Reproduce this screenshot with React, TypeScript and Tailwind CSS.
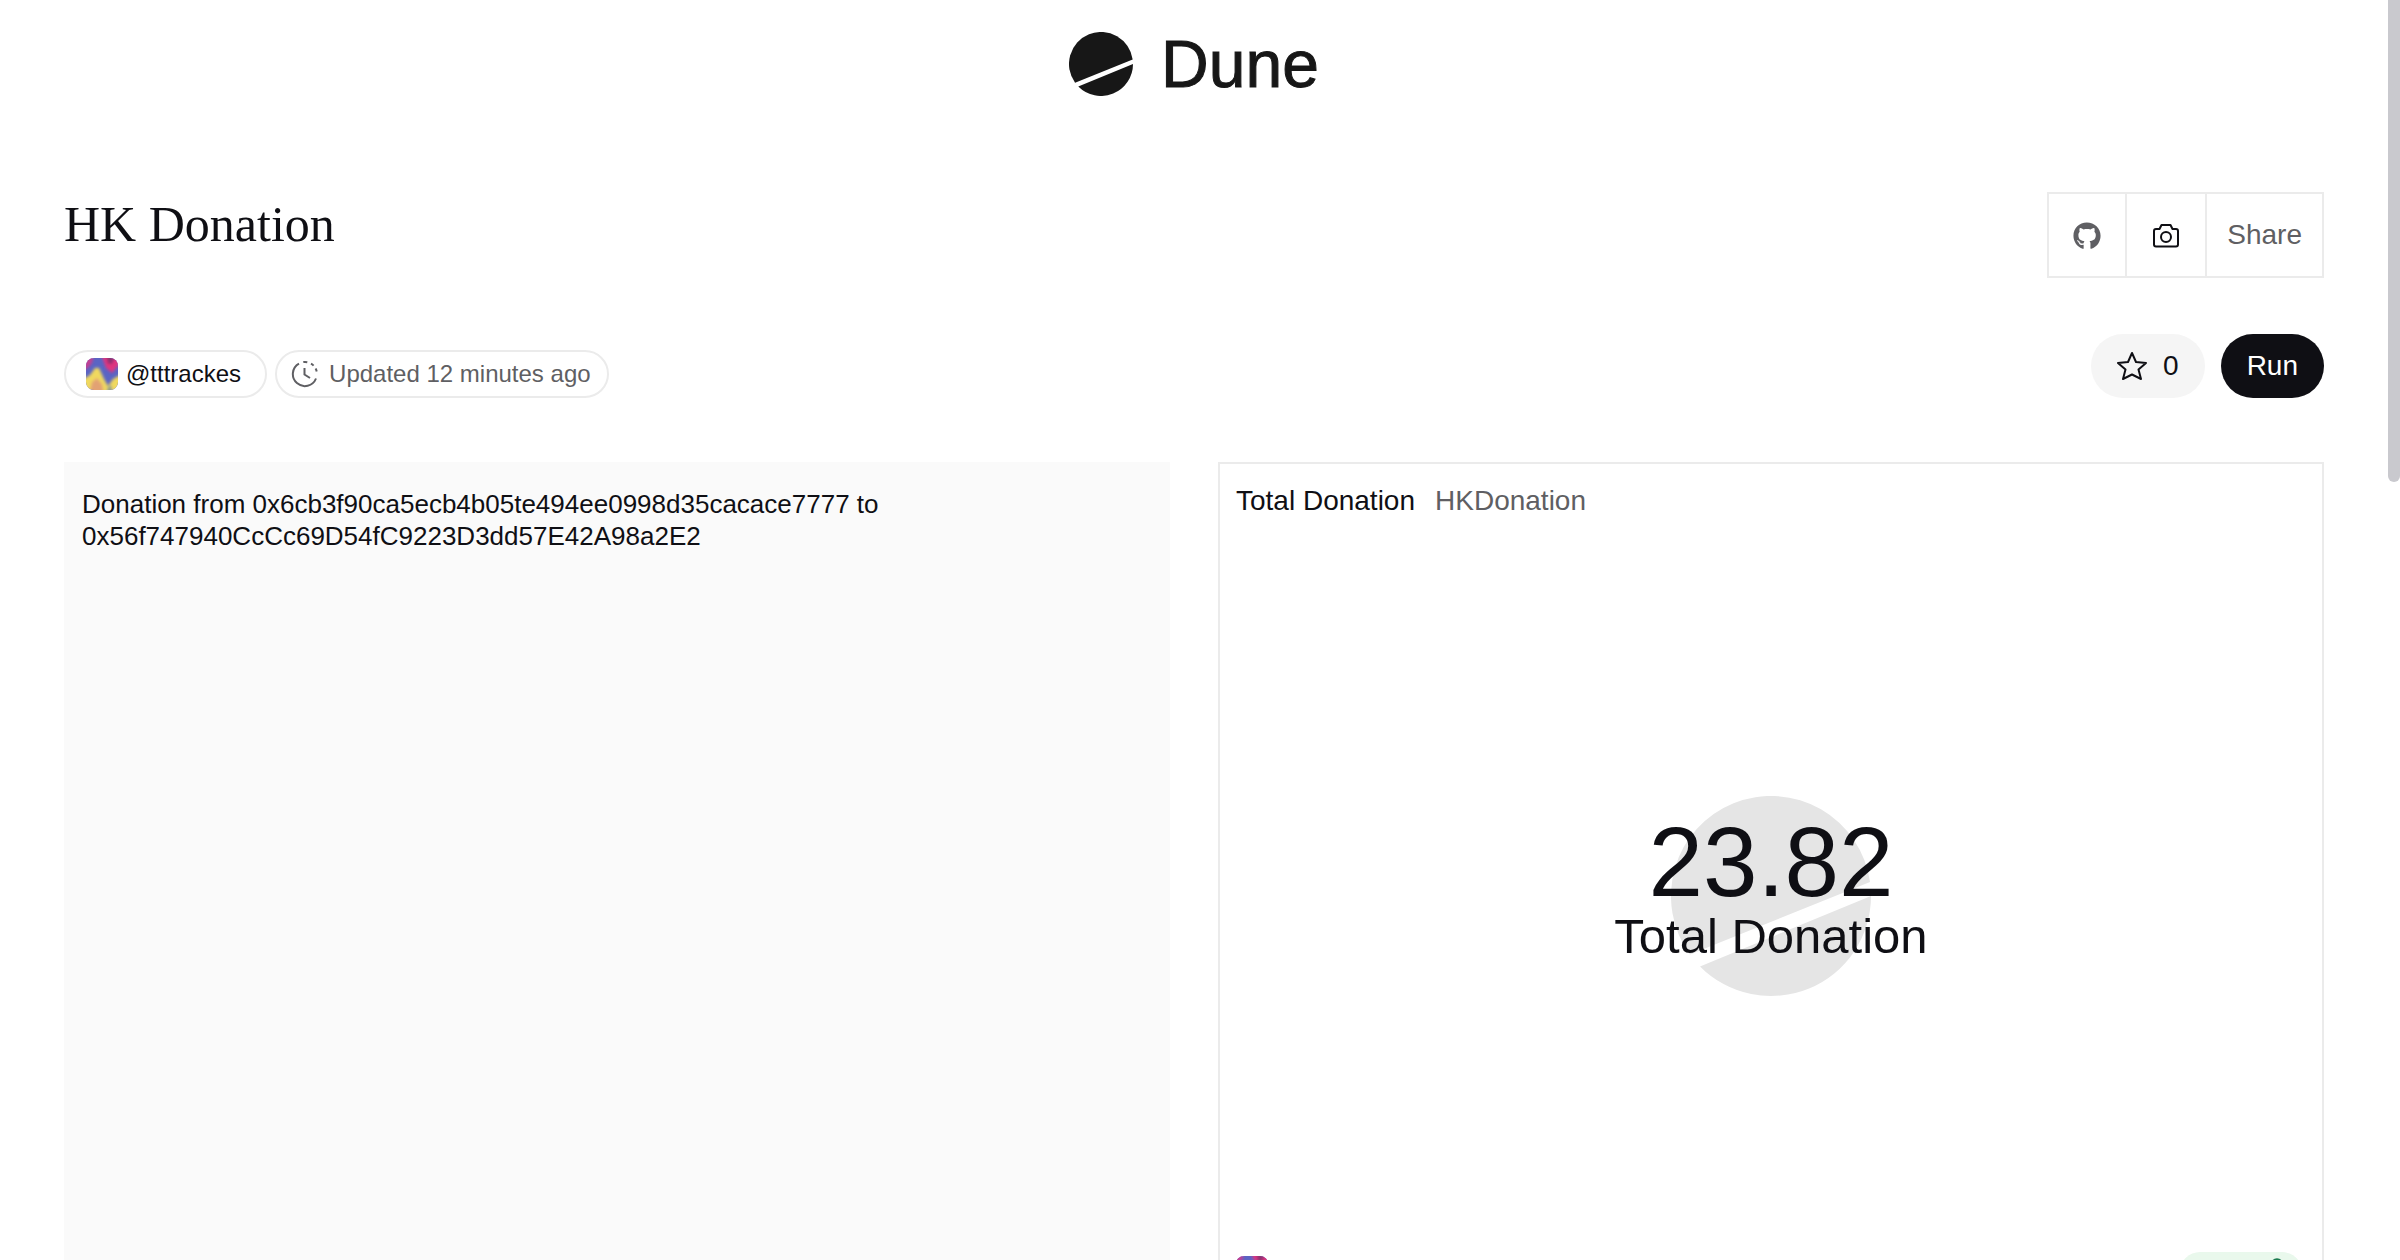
import { useId } from "react";
import { FaGithub } from "react-icons/fa";
import { BadgeCheck } from "lucide-react";

function DuneMark({ className }: { className?: string }) {
  return (
    <svg viewBox="0 0 200 200" fill="currentColor" className={className} aria-hidden="true">
      <path d="M199 86 19 158.6A100 100 0 1 1 199 86Z" />
      <path d="M200 100 29 170.4A100 100 0 0 0 200 100Z" />
    </svg>
  );
}

function Avatar() {
  const id = useId();

  return (
    <svg viewBox="0 0 32 32" className="size-8 shrink-0 rounded-lg" aria-hidden="true">
      <filter id={id} x="-20%" y="-20%" width="140%" height="140%">
        <feGaussianBlur stdDeviation="1.5" />
      </filter>
      <rect width="32" height="32" fill="#5a64c4" />
      <g filter={`url(#${id})`}>
        <path d="M-4-4H8L6 5 2 10-4 13Z" fill="#c23f93" />
        <path d="M15-4H36V5L31 9 26 15 20 10Z" fill="#e0347f" />
        <path d="M20-4H30L26 6H22Z" fill="#8d3372" />
        <path d="M-4 22 4 17 9 10 13 10 18 21 22 28 27 21 36 16V36H-4Z" fill="#f0d95f" />
        <path d="M3 36 6 24 11 20 16 26 18 36Z" fill="#e2a273" />
        <path d="M20 36 22 29 25 27 27 36Z" fill="#8a9b8c" />
      </g>
    </svg>
  );
}

function ClockIcon() {
  return (
    <svg viewBox="0 0 28 28" fill="none" stroke="currentColor" strokeWidth="2" className="size-7 shrink-0" aria-hidden="true">
      <path d="M8 3.6A12 12 0 1 0 25 18.5" />
      <path d="M12.3 2.1A12 12 0 0 1 16.3 2.2M20 3.6A12 12 0 0 1 22.6 5.6M24.6 8.5A12 12 0 0 1 25.7 11.5" />
      <path d="M13.5 8V14.5L19 18" />
    </svg>
  );
}

function CameraIcon() {
  return (
    <svg viewBox="0 0 28 28" fill="none" stroke="currentColor" strokeWidth="2" strokeLinejoin="round" className="size-7" aria-hidden="true">
      <path d="M4 7H7.5L9.5 3H18.5L20.5 7H24Q26 7 26 9V22.5Q26 24.5 24 24.5H4Q2 24.5 2 22.5V9Q2 7 4 7Z" />
      <circle cx="14" cy="15" r="5" />
    </svg>
  );
}

function StarIcon() {
  return (
    <svg viewBox="0 0 30 30" fill="none" stroke="currentColor" strokeWidth="2" strokeLinejoin="round" className="size-[30px]" aria-hidden="true">
      <path d="M15 2 19 11 29 12 21.5 18.5 24 28 15 23.5 6 28 8.5 18.5 1 12 11 11Z" />
    </svg>
  );
}

export default function App() {
  return (
    <div className="flex h-screen overflow-hidden bg-white font-['Liberation_Sans',Arial,sans-serif] text-[#0f0f14]">
      <div className="min-w-0 flex-1 px-16">
        <header className="flex h-32 items-center justify-center">
          <a href="#" className="flex items-center gap-7 text-[#171717]">
            <DuneMark className="size-16" />
            <span className="text-[66px] leading-[66px] [-webkit-text-stroke:1px_currentColor]">Dune</span>
          </a>
        </header>

        <div className="mt-16 flex items-start justify-between">
          <h1 className="font-['Liberation_Serif',serif] text-[50px] leading-[64px]">HK Donation</h1>
          <div className="flex h-[86px] divide-x-2 divide-[#ebebeb] border-2 border-[#ebebeb] text-[28px] text-[#5f5f63]">
            <button type="button" aria-label="GitHub" className="flex w-[78px] items-center justify-center pt-0.5">
              <FaGithub className="size-7" />
            </button>
            <button type="button" aria-label="Screenshot" className="flex w-20 items-center justify-center pt-0.5 text-[#0f0f14]">
              <CameraIcon />
            </button>
            <button type="button" className="px-5">Share</button>
          </div>
        </div>

        <div className="mt-14 flex items-end justify-between">
          <div className="flex gap-2 text-2xl">
            <a href="#" className="flex h-12 items-center gap-2 rounded-full border-2 border-[#ebebeb] pr-6 pl-5">
              <Avatar />
              @tttrackes
            </a>
            <button type="button" className="flex h-12 items-center gap-2.5 rounded-full border-2 border-[#ebebeb] pr-4 pl-3.5 text-[#5f5f63]">
              <ClockIcon />
              Updated 12 minutes ago
            </button>
          </div>
          <div className="flex gap-4 text-[28px]">
            <button type="button" aria-label="Star, 0 stars" className="flex h-16 items-center gap-4 rounded-full bg-[#f5f5f5] px-[26px]">
              <StarIcon />
              0
            </button>
            <button type="button" className="h-16 rounded-full bg-[#0f0f14] px-[26px] text-white">Run</button>
          </div>
        </div>

        <main className="mt-16 grid grid-cols-2 gap-12">
          <section className="bg-[#fafafa] px-[18px] py-[26px] text-[26px] leading-8">
            <p>
              Donation from 0x6cb3f90ca5ecb4b05te494ee0998d35cacace7777 to
              <br />
              0x56f747940CcCc69D54fC9223D3dd57E42A98a2E2
            </p>
          </section>

          <section className="flex flex-col border-2 border-[#ebebeb] px-4 pb-4">
            <h2 className="flex h-[76px] gap-5 pt-5 text-[28px] leading-[34px]">
              <a href="#">Total Donation</a>
              <a href="#" className="text-[#5f5f63]">HKDonation</a>
            </h2>
            <div className="relative flex h-[712px] flex-col items-center justify-center pb-3">
              <div className="absolute inset-0 flex items-center justify-center text-[#e5e5e5]">
                <DuneMark className="size-[200px]" />
              </div>
              <div className="relative text-[98px] leading-[92px]">23.82</div>
              <div className="relative text-[49px] leading-[56px]">Total Donation</div>
            </div>
            <footer className="flex items-center justify-between pr-1">
              <a href="#" aria-label="@tttrackes">
                <Avatar />
              </a>
              <button type="button" aria-label="Query status" className="flex h-10 w-[122px] items-center justify-end rounded-full bg-[#e9f8ec] pr-2.5 text-[#1c7a4f]">
                <BadgeCheck className="size-[30px]" />
              </button>
            </footer>
          </section>
        </main>
      </div>

      <div className="w-3 shrink-0" aria-hidden="true">
        <div className="-mt-2 h-[490px] rounded-full bg-[#c9c9ce]" />
      </div>
    </div>
  );
}
